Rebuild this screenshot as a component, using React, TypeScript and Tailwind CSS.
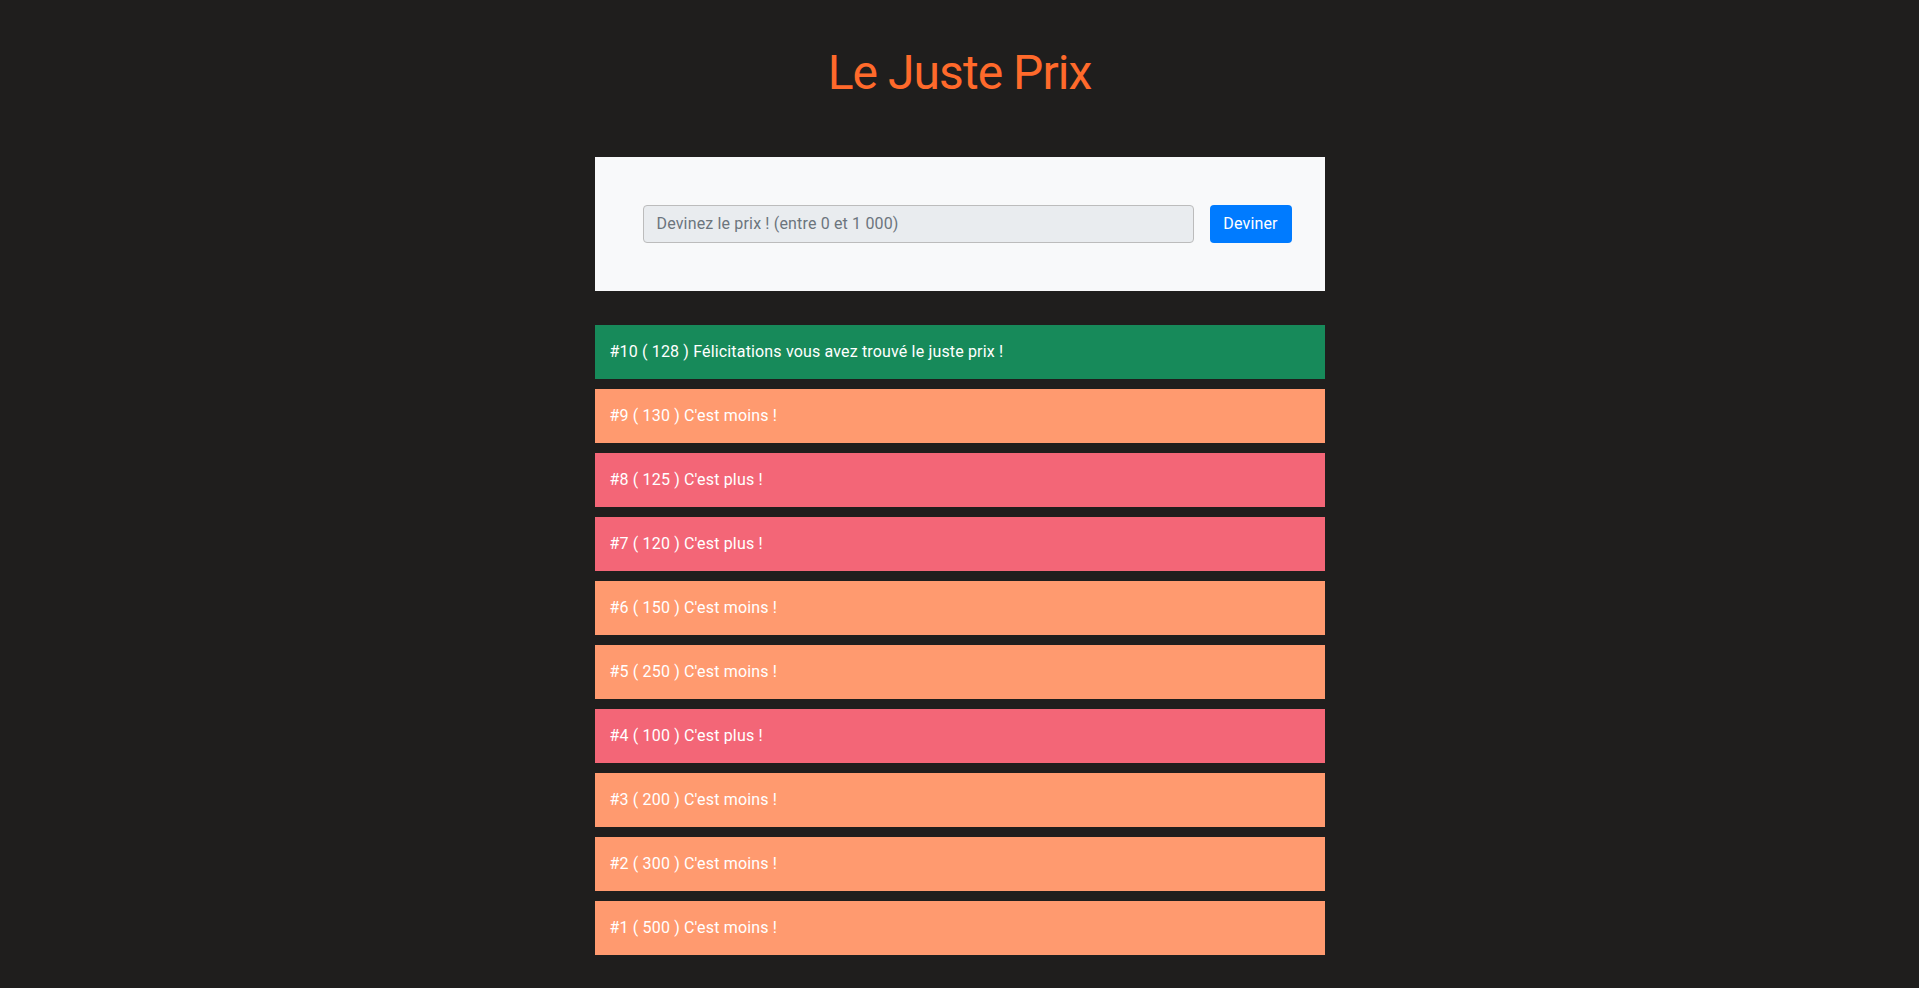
const guesses = [
  { n: 10, value: 128, msg: 'Félicitations vous avez trouvé le juste prix !', kind: 'win' },
  { n: 9, value: 130, msg: "C'est moins !", kind: 'less' },
  { n: 8, value: 125, msg: "C'est plus !", kind: 'more' },
  { n: 7, value: 120, msg: "C'est plus !", kind: 'more' },
  { n: 6, value: 150, msg: "C'est moins !", kind: 'less' },
  { n: 5, value: 250, msg: "C'est moins !", kind: 'less' },
  { n: 4, value: 100, msg: "C'est plus !", kind: 'more' },
  { n: 3, value: 200, msg: "C'est moins !", kind: 'less' },
  { n: 2, value: 300, msg: "C'est moins !", kind: 'less' },
  { n: 1, value: 500, msg: "C'est moins !", kind: 'less' },
];

const rowColor: Record<string, string> = {
  win: 'bg-[#178a5a]',
  less: 'bg-[#ff9a6f]',
  more: 'bg-[#f36677]',
};

export default function App() {
  return (
    <div className="min-h-screen bg-[#1f1e1d] pt-[44px] pb-[33px] font-['Roboto','Liberation_Sans',sans-serif]">
      {/* Title */}
      <h1 className="text-center text-[48px] leading-[1.2] font-normal tracking-[-0.02em] text-[#ff6a2b]">Le Juste Prix</h1>

      <div className="mx-auto mt-[55px] w-[730px]">
        {/* Guess form */}
        <div className="flex items-center gap-4 bg-[#f8f9fa] pt-12 pb-12 pl-12 pr-8">
          <input
            type="text"
            placeholder="Devinez le prix ! (entre 0 et 1 000)"
            className="h-[38px] w-[551px] rounded border border-[#bcbcbc] bg-[#e9ecef] px-[13px] text-base tracking-[0.01em] text-[#495057] placeholder:text-[#6c757d] outline-none"
          />
          <button className="h-[38px] w-[82px] rounded bg-[#007bff] text-base tracking-[0.01em] text-white">Deviner</button>
        </div>

        {/* History */}
        <ul className="mt-[34px] flex flex-col gap-[10px]">
          {guesses.map(g => (
            <li key={g.n} className={`${rowColor[g.kind]} px-[15px] py-[15px] text-base leading-6 tracking-[0.01em] text-white`}>
              #{g.n} ( {g.value} ) {g.msg}
            </li>
          ))}
        </ul>
      </div>
    </div>
  );
}
